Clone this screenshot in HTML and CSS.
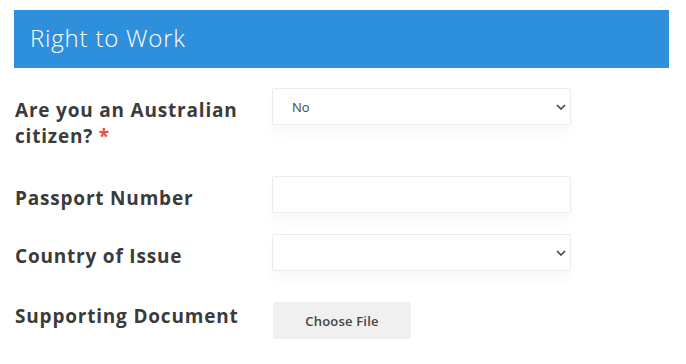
FILE: index.html
```html
<!DOCTYPE html>
<html lang="en">
<head>
    <meta charset="UTF-8">
    <meta name="viewport" content="width=device-width, initial-scale=1.0">
    <title>Right to Work</title>
    <link rel="stylesheet" href="styles.css">
</head>
<body>

<div class="section">
    <h2 class="section-title">Right to Work</h2>

    <div class="form-row first">
        <label for="citizen">Are you an Australian citizen? <span class="req">*</span></label>
        <div class="field">
            <select id="citizen">
                <option>No</option>
                <option>Yes</option>
            </select>
        </div>
    </div>

    <div class="form-row">
        <label for="passport">Passport Number</label>
        <div class="field">
            <input type="text" id="passport">
        </div>
    </div>

    <div class="form-row">
        <label for="country">Country of Issue</label>
        <div class="field">
            <select id="country">
                <option></option>
            </select>
        </div>
    </div>

    <div class="form-row last">
        <label for="doc">Supporting Document</label>
        <div class="field">
            <button type="button" class="file-btn" id="doc">Choose File</button>
        </div>
    </div>
</div>

</body>
</html>
```

FILE: styles.css
```css
body {
    margin: 0;
    background: #fff;
    font-family: "Open Sans", sans-serif;
}

.section {
    width: 655px;
    margin: 10px 0 0 14px;
}

.section-title {
    margin: 0 0 20px;
    height: 58px;
    line-height: 56px;
    padding-left: 16px;
    background: #2e8fdc;
    color: #fff;
    font-family: "Open Sans", sans-serif;
    font-weight: 300;
    font-size: 24px;
    letter-spacing: 0.8px;
}

.form-row {
    display: grid;
    grid-template-columns: 258px 299px;
    margin-bottom: 21px;
}

.form-row.first {
    margin-bottom: 27px;
}

.form-row.last {
    margin-top: 23px;
}

.form-row label {
    display: block;
    padding: 9px 0 0 1px;
    font-size: 19px;
    line-height: 26px;
    font-weight: 700;
    letter-spacing: 0.8px;
    color: #3b3b3b;
}

.req {
    color: #ef4a3c;
}

.field select,
.field input {
    display: block;
    width: 100%;
    height: 37px;
    box-sizing: border-box;
    border: 1px solid #ececec;
    border-radius: 2px;
    background: #fff;
    box-shadow: 0 8px 14px rgba(0, 0, 0, 0.03);
    font-family: "Open Sans", sans-serif;
    font-size: 13px;
    color: #444;
    padding: 0 8px 0 19px;
    outline: none;
}

.field select {
    appearance: none;
    background-image: url("data:image/svg+xml,%3Csvg xmlns='http://www.w3.org/2000/svg' width='10' height='6' viewBox='0 0 10 6'%3E%3Cpath d='M1 1l4 4 4-4' fill='none' stroke='%23444' stroke-width='1.6'/%3E%3C/svg%3E");
    background-repeat: no-repeat;
    background-position: right 4px center;
}

.file-btn {
    margin-top: 8px;
    margin-left: 1px;
    width: 138px;
    height: 37px;
    border: none;
    border-radius: 3px;
    background: #f0f0f0;
    font-family: "Open Sans", sans-serif;
    font-weight: 600;
    font-size: 13px;
    letter-spacing: 0.2px;
    color: #444;
}
```
